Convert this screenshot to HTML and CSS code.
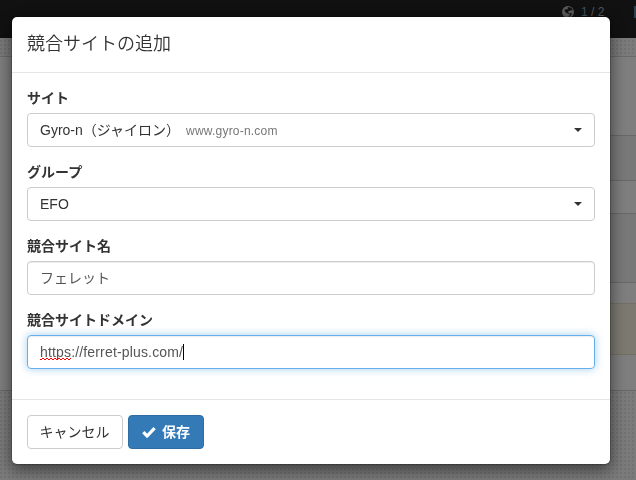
FILE: index.html
```
<!DOCTYPE html>
<html lang="ja">
<head>
    <meta charset="UTF-8">
    <meta name="viewport" content="width=device-width, initial-scale=1.0">
    <title>競合サイトの追加</title>
    <link rel="stylesheet" href="styles.css">
</head>
<body>
    <div class="page">
        <div class="navbar">
            <svg class="icon-globe" viewBox="0 0 24 24">
                <circle cx="12" cy="12" r="12" fill="#b4b4b4"/>
                <path fill="#222" d="M11 3l4-1 5 3 2 4-4-1-2 2-3 0-1 3 3 1 0 3-3-2-3-1-3-3-1-3 3-2 2 1 2-2zM16 14l4 1-2 4-4 3-1-2 3-2z"/>
            </svg>
            <span class="count"><b>1</b> / 2</span>
            <span class="nav-item"></span>
        </div>
        <div class="main">
            <div class="panel">
                <div class="row row-title"></div>
                <div class="row row-tools"></div>
                <div class="row row-search"></div>
                <div class="row row-head"></div>
                <div class="row row-item"></div>
                <div class="row row-active"></div>
                <div class="row row-last"></div>
            </div>
        </div>
    </div>

    <div class="modal-backdrop"></div>

    <div class="modal">
        <div class="modal-header">
            <h4 class="modal-title">競合サイトの追加</h4>
        </div>
        <div class="modal-body">
            <div class="form-group">
                <label>サイト</label>
                <div class="form-control select">
                    <span>Gyro-n（ジャイロン）<small>www.gyro-n.com</small></span>
                    <span class="caret"></span>
                </div>
            </div>
            <div class="form-group">
                <label>グループ</label>
                <div class="form-control select">
                    <span>EFO</span>
                    <span class="caret"></span>
                </div>
            </div>
            <div class="form-group">
                <label>競合サイト名</label>
                <div class="form-control input">フェレット</div>
            </div>
            <div class="form-group">
                <label>競合サイトドメイン</label>
                <div class="form-control input focus"><span class="misspelled">https</span>://ferret-plus.com/<span class="cursor"></span></div>
            </div>
        </div>
        <div class="modal-footer">
            <button type="button" class="btn btn-default">キャンセル</button>
            <button type="button" class="btn btn-primary">
                <svg class="icon-check" viewBox="0 0 14 12"><path d="M1.3 6.2l3.8 3.8L12.6 2.2" fill="none" stroke="#fff" stroke-width="3.2"/></svg>
                <span>保存</span>
            </button>
        </div>
    </div>
</body>
</html>
```
FILE: styles.css
```
* {
    box-sizing: border-box;
}

body {
    margin: 0;
    height: 480px;
    overflow: hidden;
    font-family: "Liberation Sans", Arial, "Noto Sans CJK JP", sans-serif;
    font-size: 14px;
    line-height: 20px;
    color: #333;
}

.page {
    height: 480px;
    background-color: #f6f6f6;
    background-image: radial-gradient(circle at 1px 1px, #e4e4e4 0.8px, transparent 1px);
    background-size: 4px 4px;
}

.navbar {
    display: flex;
    align-items: center;
    height: 38px;
    padding: 0 0 14px 562px;
    background: #222;
    font-size: 12px;
    color: #aaa;
}

.icon-globe {
    flex: none;
    width: 12px;
    height: 12px;
    margin-right: 7px;
}

.count {
    width: 53px;
    flex: none;
}

.count b {
    font-weight: normal;
    color: #7fa3c0;
}

.nav-item {
    flex: none;
    width: 8px;
    height: 12px;
    background: #5784a6;
}

.main {
    padding-top: 18px;
}

.panel {
    background: #fdfdfd;
    border-top: 1px solid #d5d5d5;
    border-bottom: 1px solid #d0d0d0;
}

.row {
    margin-left: 300px;
    border-bottom: 1px solid #d0d0d0;
}

.row-title {
    height: 79px;
}

.row-tools {
    height: 45px;
    background: #f1f1f1;
}

.row-search {
    height: 33px;
}

.row-head {
    height: 69px;
    background: #f1f1f1;
}

.row-item {
    height: 21px;
    border-color: #e5dcc8;
}

.row-active {
    height: 51px;
    background: #f8f3e2;
    border-color: #e5dcc8;
}

.row-last {
    height: 35px;
    border: 0;
}

.modal-backdrop {
    position: fixed;
    inset: 0;
    background: rgba(0, 0, 0, 0.5);
}

.modal {
    position: fixed;
    top: 16px;
    left: 11px;
    width: 600px;
    background: #fff;
    background-clip: padding-box;
    border: 1px solid rgba(0, 0, 0, 0.2);
    border-radius: 6px;
    box-shadow: 0 5px 15px rgba(0, 0, 0, 0.5);
}

.modal-header {
    height: 56px;
    padding: 14px 15px;
    border-bottom: 1px solid #e5e5e5;
}

.modal-title {
    margin: 0;
    font-size: 18px;
    font-weight: 350;
    line-height: 26px;
}

.modal-body {
    padding: 15px;
}

.form-group {
    margin-bottom: 15px;
}

label {
    display: block;
    height: 20px;
    margin-bottom: 5px;
    font-weight: bold;
}

.form-control {
    height: 34px;
    padding: 6px 12px;
    border: 1px solid #ccc;
    border-radius: 4px;
    white-space: nowrap;
}

.select {
    display: flex;
    align-items: center;
    justify-content: space-between;
}

.select small {
    margin-left: 6px;
    font-size: 12px;
    letter-spacing: 0.2px;
    color: #777;
}

.caret {
    border-top: 4px solid #333;
    border-left: 4px solid transparent;
    border-right: 4px solid transparent;
}

.input {
    color: #555;
    box-shadow: inset 0 1px 1px rgba(0, 0, 0, 0.075);
}

.focus {
    border-color: #66afe9;
    letter-spacing: 0.16px;
    box-shadow: inset 0 1px 1px rgba(0, 0, 0, 0.075), 0 0 8px rgba(102, 175, 233, 0.6);
}

/* spell checker underline, two offset rows of dashes */
.misspelled {
    background:
        repeating-linear-gradient(90deg, #f00 0 2px, transparent 2px 4px) 0 100% / 100% 1px no-repeat,
        repeating-linear-gradient(90deg, transparent 0 2px, #f00 2px 4px) 0 calc(100% - 1px) / 100% 1px no-repeat;
}

.cursor {
    display: inline-block;
    width: 1px;
    height: 16px;
    background: #000;
    vertical-align: -3px;
}

.modal-footer {
    display: flex;
    gap: 5px;
    padding: 15px;
    border-top: 1px solid #e5e5e5;
}

.btn {
    display: flex;
    align-items: center;
    justify-content: center;
    height: 34px;
    padding: 0;
    border: 1px solid #ccc;
    border-radius: 4px;
    font: inherit;
    white-space: nowrap;
}

.btn-default {
    width: 96px;
    padding-right: 1px;
    background: #fff;
    color: #333;
}

.btn-primary {
    gap: 6px;
    width: 76px;
    background: #337ab7;
    border-color: #2e6da4;
    color: #fff;
    font-weight: bold;
}

.icon-check {
    width: 14px;
    height: 12px;
}
```
